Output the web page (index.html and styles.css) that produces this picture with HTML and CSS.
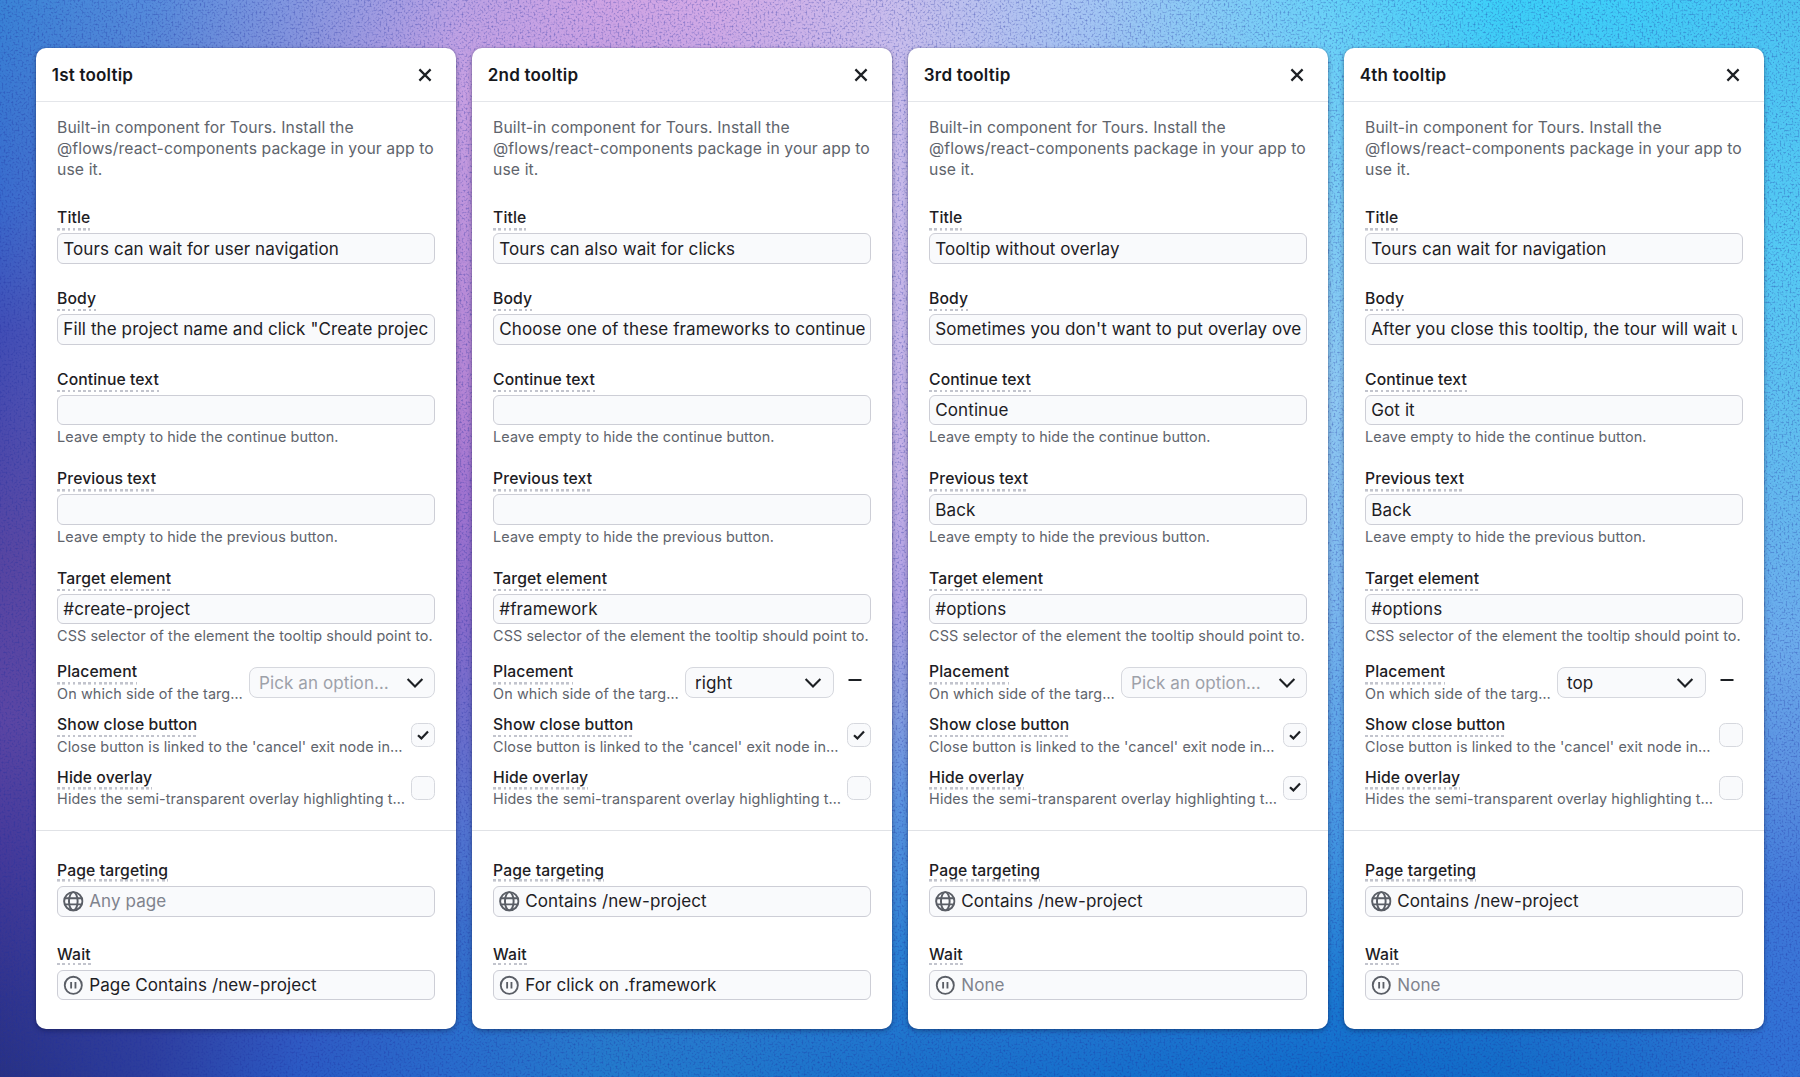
FILE: index.html
```html
<!DOCTYPE html>
<html lang="en">
<head>
<meta charset="utf-8">
<title>Tour tooltips</title>
<link rel="stylesheet" href="styles.css">
</head>
<body>
<svg class="defs" aria-hidden="true">
  <symbol id="close" viewBox="0 0 14 14"><path d="M1.4 1.4 12.6 12.6M12.6 1.4 1.4 12.6" fill="none" stroke="currentColor" stroke-width="2.2"/></symbol>
  <symbol id="chevron" viewBox="0 0 18 12"><path d="M1.6 2 9 9.4 16.4 2" fill="none" stroke="currentColor" stroke-width="2.1"/></symbol>
  <symbol id="check" viewBox="0 0 12 10"><path d="M1 5.2 4.4 8.4 11 1.4" fill="none" stroke="currentColor" stroke-width="2.2"/></symbol>
  <symbol id="minus" viewBox="0 0 14 4"><path d="M.5 2h13" fill="none" stroke="currentColor" stroke-width="2"/></symbol>
  <symbol id="globe" viewBox="0 0 20 20"><g fill="none" stroke="currentColor" stroke-width="1.9"><circle cx="10" cy="10" r="8.9"/><ellipse cx="10" cy="10" rx="4.2" ry="8.9"/><path d="M1.6 7h16.8M1.6 13h16.8"/></g></symbol>
  <symbol id="pause" viewBox="0 0 20 20"><g fill="none" stroke="currentColor" stroke-width="1.8"><circle cx="10" cy="10" r="8.3"/><path d="M7.9 6.8v6.4M12.1 6.8v6.4"/></g></symbol>
  <filter id="grain" x="0" y="0" width="100%" height="100%" color-interpolation-filters="sRGB">
    <feTurbulence type="fractalNoise" baseFrequency="0.5" numOctaves="2" seed="4"/>
    <feColorMatrix values="0 0 0 0 .12  0 0 0 0 .18  0 0 0 0 .62  2.6 0 0 0 -1.25"/>
  </filter>
</svg>

<div class="backdrop" aria-hidden="true">
  <div class="wash w0"></div><div class="wash w1"></div><div class="wash w2"></div><div class="wash w3"></div>
  <div class="wash w4"></div><div class="wash w5"></div><div class="wash w6"></div><div class="wash w7"></div>
  <div class="wash w8"></div><div class="wash w9"></div><div class="wash w10"></div><div class="wash w11"></div>
  <svg class="grain"><rect width="100%" height="100%" filter="url(#grain)"/></svg>
</div>

<main class="cards">
  <section class="card">
    <header class="head"><h2>1st tooltip</h2><svg class="close"><use href="#close"/></svg></header>
    <div class="main">
      <p class="about">Built-in component for Tours. Install the @flows/react-components package in your app to use it.</p>
      <div class="field"><label>Title</label><div class="input"><span>Tours can wait for user navigation</span></div></div>
      <div class="field"><label>Body</label><div class="input"><span>Fill the project name and click "Create projec</span></div></div>
      <div class="field"><label>Continue text</label><div class="input"></div><p class="hint">Leave empty to hide the continue button.</p></div>
      <div class="field"><label>Previous text</label><div class="input"></div><p class="hint">Leave empty to hide the previous button.</p></div>
      <div class="field"><label>Target element</label><div class="input"><span>#create-project</span></div><p class="hint">CSS selector of the element the tooltip should point to.</p></div>
      <div class="row"><div class="info"><label>Placement</label><p>On which side of the targ…</p></div><div class="select wide empty"><span>Pick an option…</span><svg><use href="#chevron"/></svg></div></div>
      <div class="row"><div class="info"><label>Show close button</label><p>Close button is linked to the 'cancel' exit node in…</p></div><div class="box"><svg><use href="#check"/></svg></div></div>
      <div class="row"><div class="info"><label>Hide overlay</label><p>Hides the semi-transparent overlay highlighting t…</p></div><div class="box"></div></div>
    </div>
    <footer class="foot">
      <div class="field"><label>Page targeting</label><div class="input muted"><svg><use href="#globe"/></svg><span>Any page</span></div></div>
      <div class="field"><label>Wait</label><div class="input"><svg><use href="#pause"/></svg><span>Page Contains /new-project</span></div></div>
    </footer>
  </section>

  <section class="card">
    <header class="head"><h2>2nd tooltip</h2><svg class="close"><use href="#close"/></svg></header>
    <div class="main">
      <p class="about">Built-in component for Tours. Install the @flows/react-components package in your app to use it.</p>
      <div class="field"><label>Title</label><div class="input"><span>Tours can also wait for clicks</span></div></div>
      <div class="field"><label>Body</label><div class="input"><span>Choose one of these frameworks to continue</span></div></div>
      <div class="field"><label>Continue text</label><div class="input"></div><p class="hint">Leave empty to hide the continue button.</p></div>
      <div class="field"><label>Previous text</label><div class="input"></div><p class="hint">Leave empty to hide the previous button.</p></div>
      <div class="field"><label>Target element</label><div class="input"><span>#framework</span></div><p class="hint">CSS selector of the element the tooltip should point to.</p></div>
      <div class="row"><div class="info"><label>Placement</label><p>On which side of the targ…</p></div><div class="select"><span>right</span><svg><use href="#chevron"/></svg></div><div class="remove"><svg><use href="#minus"/></svg></div></div>
      <div class="row"><div class="info"><label>Show close button</label><p>Close button is linked to the 'cancel' exit node in…</p></div><div class="box"><svg><use href="#check"/></svg></div></div>
      <div class="row"><div class="info"><label>Hide overlay</label><p>Hides the semi-transparent overlay highlighting t…</p></div><div class="box"></div></div>
    </div>
    <footer class="foot">
      <div class="field"><label>Page targeting</label><div class="input"><svg><use href="#globe"/></svg><span>Contains /new-project</span></div></div>
      <div class="field"><label>Wait</label><div class="input"><svg><use href="#pause"/></svg><span>For click on .framework</span></div></div>
    </footer>
  </section>

  <section class="card">
    <header class="head"><h2>3rd tooltip</h2><svg class="close"><use href="#close"/></svg></header>
    <div class="main">
      <p class="about">Built-in component for Tours. Install the @flows/react-components package in your app to use it.</p>
      <div class="field"><label>Title</label><div class="input"><span>Tooltip without overlay</span></div></div>
      <div class="field"><label>Body</label><div class="input"><span>Sometimes you don't want to put overlay ove</span></div></div>
      <div class="field"><label>Continue text</label><div class="input"><span>Continue</span></div><p class="hint">Leave empty to hide the continue button.</p></div>
      <div class="field"><label>Previous text</label><div class="input"><span>Back</span></div><p class="hint">Leave empty to hide the previous button.</p></div>
      <div class="field"><label>Target element</label><div class="input"><span>#options</span></div><p class="hint">CSS selector of the element the tooltip should point to.</p></div>
      <div class="row"><div class="info"><label>Placement</label><p>On which side of the targ…</p></div><div class="select wide empty"><span>Pick an option…</span><svg><use href="#chevron"/></svg></div></div>
      <div class="row"><div class="info"><label>Show close button</label><p>Close button is linked to the 'cancel' exit node in…</p></div><div class="box"><svg><use href="#check"/></svg></div></div>
      <div class="row"><div class="info"><label>Hide overlay</label><p>Hides the semi-transparent overlay highlighting t…</p></div><div class="box"><svg><use href="#check"/></svg></div></div>
    </div>
    <footer class="foot">
      <div class="field"><label>Page targeting</label><div class="input"><svg><use href="#globe"/></svg><span>Contains /new-project</span></div></div>
      <div class="field"><label>Wait</label><div class="input muted"><svg><use href="#pause"/></svg><span>None</span></div></div>
    </footer>
  </section>

  <section class="card">
    <header class="head"><h2>4th tooltip</h2><svg class="close"><use href="#close"/></svg></header>
    <div class="main">
      <p class="about">Built-in component for Tours. Install the @flows/react-components package in your app to use it.</p>
      <div class="field"><label>Title</label><div class="input"><span>Tours can wait for navigation</span></div></div>
      <div class="field"><label>Body</label><div class="input"><span>After you close this tooltip, the tour will wait u</span></div></div>
      <div class="field"><label>Continue text</label><div class="input"><span>Got it</span></div><p class="hint">Leave empty to hide the continue button.</p></div>
      <div class="field"><label>Previous text</label><div class="input"><span>Back</span></div><p class="hint">Leave empty to hide the previous button.</p></div>
      <div class="field"><label>Target element</label><div class="input"><span>#options</span></div><p class="hint">CSS selector of the element the tooltip should point to.</p></div>
      <div class="row"><div class="info"><label>Placement</label><p>On which side of the targ…</p></div><div class="select"><span>top</span><svg><use href="#chevron"/></svg></div><div class="remove"><svg><use href="#minus"/></svg></div></div>
      <div class="row"><div class="info"><label>Show close button</label><p>Close button is linked to the 'cancel' exit node in…</p></div><div class="box"></div></div>
      <div class="row"><div class="info"><label>Hide overlay</label><p>Hides the semi-transparent overlay highlighting t…</p></div><div class="box"></div></div>
    </div>
    <footer class="foot">
      <div class="field"><label>Page targeting</label><div class="input"><svg><use href="#globe"/></svg><span>Contains /new-project</span></div></div>
      <div class="field"><label>Wait</label><div class="input muted"><svg><use href="#pause"/></svg><span>None</span></div></div>
    </footer>
  </section>
</main>
</body>
</html>
```
FILE: styles.css
```css
* { box-sizing: border-box; margin: 0; }

body {
  width: 1800px;
  height: 1077px;
  overflow: hidden;
  font-family: Inter, "Open Sans", sans-serif;
  color: #1d2024;
}

.defs { position: absolute; width: 0; height: 0; }

/* Backdrop: vertical gradients, each faded in from the one on its left */
.backdrop { position: absolute; inset: 0; z-index: -1; }
.wash { position: absolute; inset: 0; -webkit-mask-image: linear-gradient(90deg, transparent var(--from), #000 var(--to)); mask-image: linear-gradient(90deg, transparent var(--from), #000 var(--to)); }
.w0 { --from: -2px; --to: -1px; background: linear-gradient(#3a84d6, #3a6cce 200px, #424eb6 330px, #5846a2 560px, #5c46a4 720px, #463a9a 850px, #30348c 1000px, #283284); }
.w1 { --from: 0px; --to: 150px; background: linear-gradient(#558cdc, #6050a8 540px, #2c3e9e); }
.w2 { --from: 150px; --to: 300px; background: linear-gradient(#8698e0, #8060b8 540px, #2a5ac4); }
.w3 { --from: 300px; --to: 464px; background: linear-gradient(#bca2e4, #c8a0e2 90px, #bc90da 250px, #b484d4 400px, #a274d0 490px, #8a6ccc 620px, #6e6ecc 720px, #5274d0 830px, #3a70cc 930px, #2a70cc 1030px, #286ccc); }
.w4 { --from: 464px; --to: 600px; background: linear-gradient(#d0a4e4, #7080d0 540px, #227acc); }
.w5 { --from: 600px; --to: 720px; background: linear-gradient(#d4aae6, #7090d8 540px, #2078cc); }
.w6 { --from: 720px; --to: 900px; background: linear-gradient(#c8beec, #c8baea 200px, #c4b0e6 480px, #b0a0e4 600px, #8a9ee0 700px, #5c94e0 800px, #2c82d4 950px, #1a70ca); }
.w7 { --from: 900px; --to: 1100px; background: linear-gradient(#a2c6f4, #80a0e0 540px, #1670cc); }
.w8 { --from: 1100px; --to: 1336px; background: linear-gradient(#66d2f8, #7accf4 200px, #8ec8f2 400px, #7cb8ee 600px, #4e9ce4 800px, #1e7cd2 980px, #106cca); }
.w9 { --from: 1336px; --to: 1500px; background: linear-gradient(#3cd0f8, #60a0e0 540px, #126cc8); }
.w10 { --from: 1500px; --to: 1640px; background: linear-gradient(#40cef8, #60a0e0 540px, #1c6ecc); }
.w11 { --from: 1640px; --to: 1782px; background: linear-gradient(#4cc4f2, #54caf4 250px, #60c0f0 420px, #6cacec 640px, #5a90e0 780px, #4078d8 900px, #2e70d4); }
.grain { position: absolute; width: 100%; height: 100%; opacity: .45; }

.cards { display: flex; gap: 16.5px; padding: 48.3px 36.3px; }

.card {
  width: 419.5px;
  height: 980.8px;
  flex: none;
  border-radius: 10px;
  background: #fff;
  box-shadow: 0 0 0 1px rgba(20, 30, 80, .08), 0 2px 5px rgba(0, 10, 40, .34);
}

.head {
  display: flex;
  align-items: center;
  justify-content: space-between;
  height: 53.4px;
  padding: 1px 24.3px 0 15.5px;
  border-bottom: 1px solid #e4e6ea;
}
.head h2 { font-size: 17.03px; font-weight: 600; letter-spacing: .2px; color: #16181c; }
.close { width: 14px; height: 14px; }

.main { padding: 15.4px 21px 20.1px 20.8px; }
.about { margin-bottom: 27.3px; font-size: 15.72px; line-height: 21px; letter-spacing: .09px; color: #60646c; }

.field { margin-bottom: 24.3px; }
label {
  display: block;
  width: fit-content;
  height: 23.3px;
  font-size: 15.72px;
  font-weight: 500;
  line-height: 21px;
  letter-spacing: .09px;
  white-space: nowrap;
  background: repeating-linear-gradient(90deg, #c2c4cd 0 2.7px, transparent 2.7px 5.25px) 0 100% / 100% 2.6px no-repeat;
}
.field label { margin-bottom: 2.7px; }

.input {
  display: flex;
  align-items: center;
  gap: 5.4px;
  height: 30.5px;
  padding: 0 5.2px;
  border: 1px solid #cdced6;
  border-radius: 6px;
  background: #f9fafc;
  font-size: 17.03px;
  letter-spacing: .09px;
}
.input span { flex: 1; overflow: hidden; white-space: nowrap; line-height: 26px; }
.input svg { width: 20.6px; height: 20.6px; flex: none; color: #5a5e66; }
.input.muted { color: #80838d; }

.hint { height: 18.7px; padding-top: 4.9px; font-size: 14.41px; line-height: 13.5px; letter-spacing: .07px; color: #60646c; white-space: nowrap; }

.row { display: flex; align-items: center; height: 43px; margin-bottom: 9.7px; }
.field + .row { margin-top: -6px; }
.row:last-child { margin-bottom: 0; }
.info { flex: 1; min-width: 0; }
.info p { margin-top: -.8px; font-size: 14.41px; line-height: 20.5px; letter-spacing: .08px; color: #60646c; white-space: nowrap; }

.select {
  display: flex;
  align-items: center;
  justify-content: space-between;
  width: 148.8px;
  height: 31.4px;
  flex: none;
  margin-bottom: .6px;
  padding: 0 10.2px 0 9.2px;
  border: 1px solid #d6d8de;
  border-radius: 8px;
  background: #f9fafc;
  font-size: 17.03px;
  letter-spacing: .09px;
}
.select.wide { width: 186px; }
.select.empty span { color: #9da1a9; }
.select svg { width: 18px; height: 12px; }

.remove { display: flex; justify-content: center; width: 31.4px; margin: 0 0 6px 5.8px; }
.remove svg { width: 14px; height: 4px; }

.box { display: flex; align-items: center; justify-content: center; width: 23.6px; height: 23.6px; flex: none; margin-bottom: .8px; border: 1px solid #d6d8de; border-radius: 6.5px; background: #f9fafc; }
.box svg { width: 12px; height: 10px; margin-bottom: 1px; }

.foot { padding: 29.3px 21px 0 20.8px; border-top: 1px solid #e0e2e6; }
.foot .field { margin-bottom: 27px; }
.foot label { height: 21.6px; margin-bottom: 4.4px; }
```
